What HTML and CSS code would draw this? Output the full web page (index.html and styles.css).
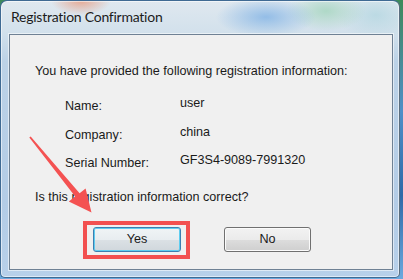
FILE: index.html
```html
<!DOCTYPE html>
<html>
<head>
<meta charset="utf-8">
<link rel="stylesheet" href="styles.css">
</head>
<body>
<div class="window">
  <div class="titlebar">Registration Confirmation</div>
  <div class="client">
    <p class="intro">You have provided the following registration information:</p>
    <div class="info">
      <span class="label">Name:</span><span class="value">user</span>
      <span class="label">Company:</span><span class="value">china</span>
      <span class="label">Serial Number:</span><span class="value">GF3S4-9089-7991320</span>
    </div>
    <p class="question">Is this registration information correct?</p>
    <div class="buttons">
      <div class="highlight"><button class="btn btn-default">Yes</button></div>
      <button class="btn">No</button>
    </div>
  </div>
  <svg class="arrow" width="120" height="230" viewBox="0 0 120 230">
    <polygon points="29.3,137.5 30.7,136.5 79.6,193.2 85.6,188.6 91.5,212.5 68.8,201.6 75.2,196.6" fill="#f45252"/>
  </svg>
</div>
</body>
</html>
```

FILE: styles.css
```css
html, body {
  margin: 0;
  padding: 0;
}
body {
  width: 403px;
  height: 279px;
  overflow: hidden;
  background: linear-gradient(180deg, #3d8a5a 0%, #4f8fc8 40%, #2f6aa8 70%, #6aa9de 100%);
}
.window {
  position: relative;
  box-sizing: border-box;
  width: 400px;
  height: 278px;
  border: 1px solid #3f6a93;
  border-right-color: #5b6f80;
  border-radius: 7px 7px 5px 5px;
  padding: 0 6px 7px 8px;
  display: flex;
  flex-direction: column;
  background:
    radial-gradient(ellipse 30px 14px at 80px 0px, rgba(232,150,120,0.75), rgba(232,150,120,0) 100%),
    radial-gradient(ellipse 50px 20px at 265px 16px, rgba(140,185,230,0.9), rgba(140,185,230,0) 100%),
    radial-gradient(ellipse 40px 20px at 325px 10px, rgba(170,215,195,0.9), rgba(170,215,195,0) 100%),
    radial-gradient(ellipse 40px 24px at 375px 14px, rgba(180,215,225,0.8), rgba(180,215,225,0) 100%),
    linear-gradient(180deg, #dfe8ef 0px, #d3e1ec 30px, #bcd2e7 60px, #b3cce6 200px, #b7d0ea 278px);
  box-shadow: inset 0 0 0 1px rgba(255,255,255,0.55);
}
.titlebar {
  height: 33px;
  box-sizing: border-box;
  padding: 6px 0 0 2px;
  font-family: Lato, "Open Sans", sans-serif;
  font-size: 14px;
  letter-spacing: -0.25px;
  line-height: 20px;
  color: #1c1c1c;
}
.client {
  flex: 1;
  box-sizing: border-box;
  border: 1px solid #6f8194;
  box-shadow: 0 0 0 1px rgba(255,255,255,0.55);
  background: #f0f0f0;
  padding: 29px 0 0 25px;
  font-family: "Liberation Sans", Arial, sans-serif;
  font-size: 12.6px;
  line-height: 15px;
  color: #1a1a1a;
  display: flex;
  flex-direction: column;
}
.intro, .question {
  margin: 0;
}
.info {
  display: grid;
  grid-template-columns: 115px auto;
  grid-auto-rows: 28.5px;
  margin: 17px 0 0 30px;
}
.label {
  padding-top: 3px;
}
.value {
  padding-top: 0;
}
.question {
  margin-top: 8px;
}
.buttons {
  display: flex;
  gap: 43px;
  margin: 22px 0 0 58px;
}
.highlight {
  position: relative;
  display: flex;
}
.highlight::after {
  content: "";
  position: absolute;
  left: -10px;
  right: -9px;
  top: -6px;
  bottom: -7px;
  border: 4px solid #f25050;
}
.btn {
  box-sizing: border-box;
  width: 87px;
  height: 25px;
  padding: 0;
  border: 1px solid #707070;
  border-radius: 3px;
  background: linear-gradient(180deg, #f2f2f2 0%, #ebebeb 50%, #dddddd 50%, #cfcfcf 100%);
  box-shadow: inset 0 0 0 1px #fbfbfb;
  font-family: "Liberation Sans", Arial, sans-serif;
  font-size: 12.6px;
  color: #1a1a1a;
}
.btn-default {
  width: 88px;
  border-color: #3c7fb1;
  box-shadow: inset 0 0 0 1px #5fcdf0;
  background: linear-gradient(180deg, #f0f4f6 0%, #e8edf0 50%, #dbe1e5 50%, #d0d7dc 100%);
}
.arrow {
  position: absolute;
  left: -1px;
  top: -1px;
  pointer-events: none;
}
```
